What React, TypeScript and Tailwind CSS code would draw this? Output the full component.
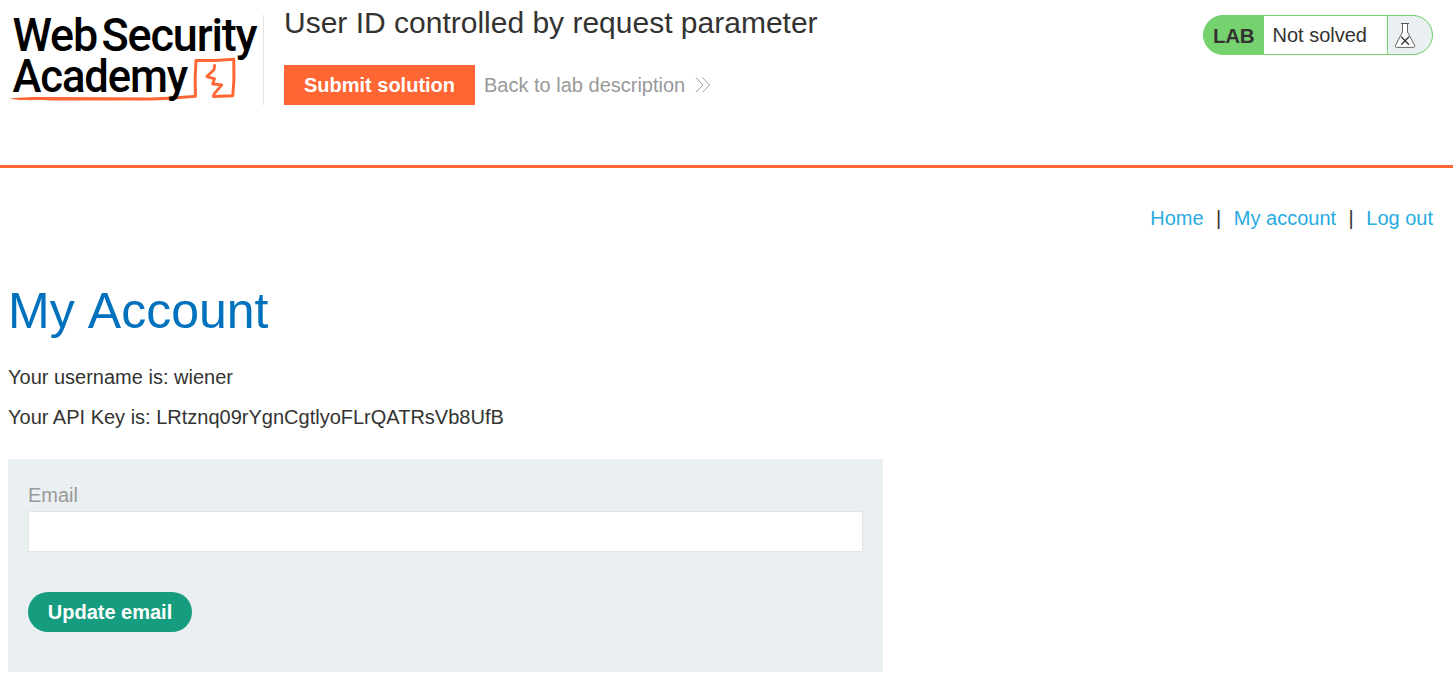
function Logo() {
  return (
    <svg width="264" height="105" viewBox="0 0 264 105" className="block shrink-0 overflow-visible">
      <g fill="none" stroke="#ff6633" strokeLinecap="round" strokeLinejoin="round">
        <path d="M195.4 96L195.2 78L196 60.4L215 60.6L233.8 59.3L233.9 80L232.8 95.7L213.6 96.5" strokeWidth="3" />
        <path d="M214.6 65.5L214 69.8L206.8 76.6L214.6 78.8L212.6 84L221.8 84.8L214 94.2L213.6 96.2" strokeWidth="2.8" />
      </g>
      <path d="M9.5 98.7C20 97 40 97.1 60 97.1L150 97.5C170 97.2 182 95.9 196 94.8L196 97.8C185 98.6 170 100.1 150 100.5C100 100.6 40 100.5 20 100Z" fill="#ff6633" />
      <g fill="#000" fontFamily="Roboto, sans-serif" fontWeight="500" fontSize="47" letterSpacing="-1.2">
        <text x="12.5" y="51.2" textLength="84.5" lengthAdjust="spacingAndGlyphs">Web</text>
        <text x="101.5" y="51.2" textLength="155" lengthAdjust="spacingAndGlyphs">Security</text>
        <text x="12.5" y="92" textLength="174.5" lengthAdjust="spacingAndGlyphs">Academy</text>
      </g>
      <path d="M263.5 15V105" stroke="#e4e4e4" />
    </svg>
  );
}

function Flask() {
  return (
    <svg width="22" height="26" viewBox="0 0 22 26" className="ml-1.5 block">
      <path d="M8.5 1.5V10L1.5 23.4Q1 25.4 2.6 25.4H19.4Q21.2 25.4 20.7 23.4L13.5 10V1.5" fill="#fff" stroke="#666" strokeWidth="1" />
      <path d="M7 1.5H15" stroke="#555" strokeWidth="1" />
      <path d="M7.2 14.8L15 22.8M15 14.8L7.2 22.8" stroke="#333332" strokeWidth="1.3" fill="none" />
    </svg>
  );
}

export default function App() {
  return (
    <div className="min-h-[696px] bg-white font-['Liberation_Sans',Arial,sans-serif] text-[20px] leading-5 text-[#333332]">
      <header className="flex h-[168px] items-start border-b-[3px] border-[#ff6633]">
        <Logo />
        <div className="ml-5 grow">
          <h2 className="pt-[7px] text-[30px] leading-8 whitespace-nowrap">User ID controlled by request parameter</h2>
          <div className="mt-[26px] flex items-center">
            <button className="h-10 w-[191px] bg-[#ff6633] font-bold text-white">Submit solution</button>
            <a className="ml-[9px] flex items-center text-[#999]">
              Back to lab description
              <svg width="16" height="16" viewBox="0 0 16 16" className="ml-2.5" fill="none" stroke="#999" strokeWidth="1">
                <path d="M1 .7L8 8L1 15.3M7.5 .7L14.5 8L7.5 15.3" />
              </svg>
            </a>
          </div>
        </div>
        <div className="mt-[15px] mr-5 flex h-10 w-[230px] items-stretch overflow-hidden rounded-[20px] border border-[#75d26f] bg-[#75d26f]">
          <div className="flex w-[60px] items-center bg-[#75d26f] pt-0.5 pl-[9px] text-[20.5px] font-bold tracking-[-0.3px]">LAB</div>
          <div className="flex grow items-center bg-white pl-[8.5px]">Not solved</div>
          <div className="flex w-[45px] items-center border-l border-[#75d26f] bg-[#eaeff2]">
            <Flask />
          </div>
        </div>
      </header>
      <nav className="mr-5 flex h-[100px] items-center justify-end text-[#29abe2]">
        <a>Home</a>
        <span className="mx-[12.5px] text-[#333332]">|</span>
        <a>My account</a>
        <span className="mx-[12.5px] text-[#333332]">|</span>
        <a>Log out</a>
      </nav>
      <main className="px-2">
        <h1 className="pt-[14px] text-[50px] leading-[58px] [word-spacing:2px] text-[#0071bc]">My Account</h1>
        <p className="mt-[27px]">Your username is: wiener</p>
        <p className="mt-5">Your API Key is: LRtznq09rYgnCgtlyoFLrQATRsVb8UfB</p>
        <form className="mt-8 h-[213px] w-[875px] bg-[#eaeff2] px-5 pt-[26px]">
          <label className="block text-[#999]">Email</label>
          <input className="mt-[6px] block h-[41px] w-full border border-[#e4e4e4] bg-white px-2" />
          <button type="button" className="mt-10 block h-10 w-[164px] rounded-full bg-[#169c7f] font-bold text-white">Update email</button>
        </form>
      </main>
    </div>
  );
}
